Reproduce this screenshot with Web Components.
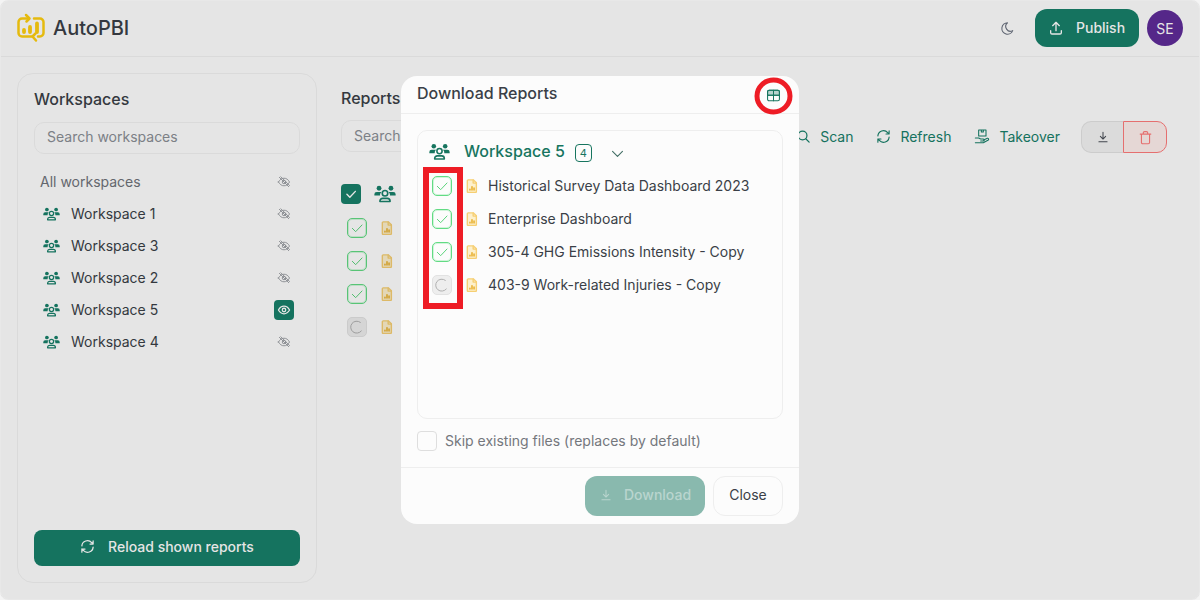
<!DOCTYPE html>
<html lang="en">
<head>
<meta charset="utf-8">
<title>AutoPBI</title>
<style>
    html, body { margin: 0; height: 100%; background: #f4f4f4; overflow: hidden; }
    body { font-family: Inter, "Liberation Sans", sans-serif; color: #3a3f47; }
</style>
</head>
<body>
<app-shell>
    <app-header slot="header"></app-header>
    <side-panel slot="side">
        <workspace-item label="All workspaces" plain></workspace-item>
        <workspace-item label="Workspace 1"></workspace-item>
        <workspace-item label="Workspace 3"></workspace-item>
        <workspace-item label="Workspace 2"></workspace-item>
        <workspace-item label="Workspace 5" active></workspace-item>
        <workspace-item label="Workspace 4"></workspace-item>
    </side-panel>
    <reports-panel slot="main"></reports-panel>
    <download-dialog slot="dialog">
        <report-row label="Historical Survey Data Dashboard 2023" state="done"></report-row>
        <report-row label="Enterprise Dashboard" state="done"></report-row>
        <report-row label="305-4 GHG Emissions Intensity - Copy" state="done"></report-row>
        <report-row label="403-9 Work-related Injuries - Copy" state="busy"></report-row>
    </download-dialog>
</app-shell>

<script>
const ICONS = {
    users: '<circle cx="12" cy="9" r="3"/><path d="M6.500 18v-.5a3 3 0 0 1 3-3h5a3 3 0 0 1 3 3v.5z"/><circle cx="18.500" cy="3.500" r="2.600" fill="currentColor" stroke="none"/><circle cx="5.500" cy="3.500" r="2.600" fill="currentColor" stroke="none"/><path d="M16 7.500h5a2.600 2.600 0 0 1 2.600 2.600v1.400h-6.100a5 5 0 0 0-1.500-4z M8 7.500H3a2.600 2.600 0 0 0-2.600 2.600v1.400h6.100a5 5 0 0 1 1.500-4z" fill="currentColor" stroke="none"/>',
    eyeOff: '<path d="M2.500 12c2.400-4.300 5.600-6.500 9.500-6.500s7.100 2.200 9.500 6.500c-2.400 4.300-5.600 6.500-9.500 6.500s-7.100-2.200-9.500-6.500z"/><circle cx="12" cy="12" r="3"/><path d="M4 4l16 16M6.500 3l15 15"/>',
    eye: '<path d="M2.500 12c2.400-4.300 5.600-6.500 9.500-6.500s7.100 2.200 9.500 6.500c-2.400 4.300-5.600 6.500-9.500 6.500s-7.100-2.200-9.500-6.500z"/><circle cx="12" cy="12" r="3"/>',
    refresh: '<path d="M3 11a9 9 0 0 1 15.700-5.300L21 8M21 3v5h-5M21 13a9 9 0 0 1-15.700 5.300L3 16M8 16H3v5"/>',
    upload: '<path d="M4 16v3a2 2 0 0 0 2 2h12a2 2 0 0 0 2-2v-3M7 8.500L12 3.500l5 5M12 3.500V16"/>',
    download: '<path d="M12 4v11M7.500 11l4.500 4.500 4.500-4.500M5 20h14"/>',
    moon: '<path d="M12 3a7.500 7.500 0 0 0 8.300 12.400A9 9 0 1 1 12 3z"/>',
    table: '<path d="M2.500 11.500V6a2.500 2.500 0 0 1 2.500-2.500h14a2.500 2.500 0 0 1 2.500 2.500v5.500z" fill="currentColor" fill-opacity=".3"/><rect x="2.500" y="3.500" width="19" height="17" rx="2.500"/><path d="M2.500 11.500h19M12 3.500v17"/>',
    chevron: '<path d="M5 9l7 7 7-7"/>',
    search: '<circle cx="10.500" cy="10.500" r="7"/><path d="M16 16l5 5"/>',
    trash: '<path d="M3.500 6.500h17M8.500 6.500V4.500a2 2 0 0 1 2-2h3a2 2 0 0 1 2 2v2M18.500 6.500V20a2 2 0 0 1-2 2h-9a2 2 0 0 1-2-2V6.500"/>',
    takeover: '<path d="M7 3h11v9H7zM11 3v3h3V3M2 15h5l3 1.500h4a1.500 1.500 0 0 1 0 3h-4M14.500 18l5.500-2.500a1.500 1.500 0 0 1 1.500 2.500L14 22H2"/>',
    check: '<path d="M5 12.500l5 5 9.500-10"/>',
    spinner: '<path d="M17 5A9 9 0 1 0 18.500 18"/>',
    report: '<path d="M5.500 1.500h9l5 5v15a1.500 1.500 0 0 1-1.500 1.500H5.500A1.500 1.500 0 0 1 4 21.500V3a1.500 1.500 0 0 1 1.500-1.500z" fill="#fdf0cc"/><path d="M14 1.500V7h5.500"/><path d="M8.500 19v-1.500M12 19v-6M15.500 19v-3.500" stroke="#e6a91f"/>'
};
const VIEWS = { users: '0 0 24 19' };

class ApIcon extends HTMLElement {
    connectedCallback() {
        const name = this.getAttribute('name');
        const size = this.getAttribute('size') || 16;
        const high = this.getAttribute('high') || size;
        const width = this.getAttribute('stroke') || 2;
        this.attachShadow({ mode: 'open' });
        this.shadowRoot.innerHTML = `
            <style>
                :host { display: inline-flex; flex: none; width: ${size}px; height: ${high}px; }
                svg { width: 100%; height: 100%; display: block; }
            </style>
            <svg viewBox="${VIEWS[name] || '0 0 24 24'}" fill="none" stroke="currentColor" stroke-width="${width}"
                stroke-linecap="round" stroke-linejoin="round">${ICONS[name]}</svg>
        `;
    }
}

class AppShell extends HTMLElement {
    constructor() {
        super();
        this.attachShadow({ mode: 'open' });
        this.shadowRoot.innerHTML = `
            <style>
                :host {
                    display: flex;
                    flex-direction: column;
                    position: relative;
                    box-sizing: border-box;
                    height: 600px;
                    background: #ffffff;
                    border: 1px solid #e8e8e8;
                    border-radius: 8px;
                    overflow: hidden;
                    --teal: #18806a;
                    --text: #3a3f47;
                    --line: #f3f3f3;
                }
                .body { flex: 1; display: flex; min-height: 0; padding: 16px; }
                .overlay {
                    position: absolute;
                    inset: 0;
                    display: flex;
                    align-items: center;
                    justify-content: center;
                    background: rgba(0, 0, 0, 0.1);
                }
            </style>
            <slot name="header"></slot>
            <div class="body">
                <slot name="side"></slot>
                <slot name="main"></slot>
            </div>
            <div class="overlay"><slot name="dialog"></slot></div>
        `;
    }
}

class AppHeader extends HTMLElement {
    constructor() {
        super();
        this.attachShadow({ mode: 'open' });
        this.shadowRoot.innerHTML = `
            <style>
                :host {
                    display: flex;
                    align-items: center;
                    flex: none;
                    box-sizing: border-box;
                    height: 56px;
                    padding: 0 16px 1px 15px;
                    border-bottom: 1px solid var(--line);
                }
                .logo { width: 30px; height: 30px; margin-right: 7px; display: block; }
                .name { font-size: 20px; font-weight: 500; color: var(--text); flex: 1; }
                .moon { color: #6b7280; margin-right: 20px; }
                .publish {
                    display: flex;
                    align-items: center;
                    gap: 12px;
                    box-sizing: border-box;
                    width: 104px;
                    height: 38px;
                    padding: 0 0 1px 13px;
                    margin-right: 8px;
                    border-radius: 12px;
                    background: var(--teal);
                    color: #fff;
                    font-size: 14px;
                    font-weight: 500;
                }
                .avatar {
                    display: flex;
                    align-items: center;
                    justify-content: center;
                    width: 36px;
                    height: 36px;
                    border-radius: 50%;
                    background: #5f2c99;
                    color: #fff;
                    font-size: 14px;
                }
            </style>
            <svg class="logo" viewBox="0 0 30 30" fill="none" stroke="#ffd010" stroke-width="2.500" stroke-linecap="round" stroke-linejoin="round">
                <path d="M12.500 5.500H6a3.500 3.500 0 0 0-3.500 3.500v11A3.500 3.500 0 0 0 6 23.500h10.500M18 5.500h6A3.500 3.500 0 0 1 27.500 9v11a3.500 3.500 0 0 1-3.500 3.500h-2"/>
                <path d="M10 2l3.500 3.500-3 3M20 27.500l-3.500-4 3-3"/>
                <path d="M8 17v2M14 14v5M21 10.500V19" stroke-width="3.800"/>
            </svg>
            <span class="name">AutoPBI</span>
            <ap-icon class="moon" name="moon" size="15" stroke="1.800"></ap-icon>
            <div class="publish"><ap-icon name="upload" size="16"></ap-icon>Publish</div>
            <div class="avatar">SE</div>
        `;
    }
}

class SidePanel extends HTMLElement {
    constructor() {
        super();
        this.attachShadow({ mode: 'open' });
        this.shadowRoot.innerHTML = `
            <style>
                :host {
                    display: flex;
                    flex-direction: column;
                    flex: none;
                    box-sizing: border-box;
                    width: 300px;
                    padding: 15px 16px 16px;
                    border: 1px solid var(--line);
                    border-radius: 16px;
                }
                h2 { margin: 0 0 13px; font-size: 16px; line-height: 20px; font-weight: 500; color: var(--text); }
                .search {
                    box-sizing: border-box;
                    height: 32px;
                    padding: 0 12px;
                    border: 1px solid var(--line);
                    border-radius: 10px;
                    font-size: 14px;
                    line-height: 28px;
                    color: #8b8f96;
                }
                .list { flex: 1; display: flex; flex-direction: column; margin-top: 12px; }
                .reload {
                    display: flex;
                    align-items: center;
                    justify-content: center;
                    gap: 13px;
                    box-sizing: border-box;
                    height: 36px;
                    padding-bottom: 3px;
                    border-radius: 8px;
                    background: var(--teal);
                    color: #fff;
                    font-size: 14px;
                    font-weight: 500;
                }
            </style>
            <h2>Workspaces</h2>
            <div class="search">Search workspaces</div>
            <div class="list"><slot></slot></div>
            <div class="reload"><ap-icon name="refresh" size="15"></ap-icon>Reload shown reports</div>
        `;
    }
}

class WorkspaceItem extends HTMLElement {
    constructor() {
        super();
        this.attachShadow({ mode: 'open' });
    }

    connectedCallback() {
        const plain = this.hasAttribute('plain');
        const active = this.hasAttribute('active');
        this.shadowRoot.innerHTML = `
            <style>
                :host {
                    display: flex;
                    align-items: center;
                    box-sizing: border-box;
                    height: 32px;
                    padding: 0 6px 1px;
                    font-size: 14px;
                    color: var(--text);
                }
                :host([plain]) { color: #6f737a; }
                .users { color: var(--teal); margin: 1px 11px 0 3px; }
                .label { flex: 1; }
                .eye {
                    display: flex;
                    align-items: center;
                    justify-content: center;
                    width: 20px;
                    height: 20px;
                    border-radius: 4px;
                    color: #9a9da2;
                }
                .eye.on { background: var(--teal); color: #fff; }
            </style>
            ${plain ? '' : '<ap-icon class="users" name="users" size="17" high="13.500" stroke="1.800"></ap-icon>'}
            <span class="label">${this.getAttribute('label')}</span>
            <span class="eye ${active ? 'on' : ''}"><ap-icon name="${active ? 'eye' : 'eyeOff'}" size="14" stroke="${active ? 2.2 : 1.6}"></ap-icon></span>
        `;
    }
}

class ReportRow extends HTMLElement {
    constructor() {
        super();
        this.attachShadow({ mode: 'open' });
    }

    connectedCallback() {
        const done = this.getAttribute('state') === 'done';
        const label = this.getAttribute('label');
        this.shadowRoot.innerHTML = `
            <style>
                :host {
                    display: flex;
                    align-items: center;
                    height: 33px;
                    font-size: 14px;
                    color: var(--text);
                }
                .box {
                    display: flex;
                    align-items: center;
                    justify-content: center;
                    box-sizing: border-box;
                    width: 20px;
                    height: 20px;
                    border-radius: 5px;
                    border: 1px solid #62db84;
                    box-shadow: inset 0 0 0 1px rgba(110, 225, 140, 0.3);
                    color: #5cd47c;
                }
                .box.busy { border-color: #e2e2e2; box-shadow: none; background: #eeeeee; color: #b0b0b0; }
                .file { color: #f6cf73; margin: 0 9px 0 13px; }
            </style>
            <span class="box ${done ? '' : 'busy'}"><ap-icon name="${done ? 'check' : 'spinner'}" size="16" stroke="1.500"></ap-icon></span>
            <ap-icon class="file" name="report" size="14" stroke="2.400"></ap-icon>
            ${label ? `<span>${label}</span>` : ''}
        `;
    }
}

class ReportsPanel extends HTMLElement {
    constructor() {
        super();
        this.attachShadow({ mode: 'open' });
        this.shadowRoot.innerHTML = `
            <style>
                :host {
                    display: block;
                    flex: 1;
                    min-width: 0;
                    padding: 15px 0 0 24px;
                    margin-right: 16px;
                }
                h2 { margin: 0 0 12px; font-size: 16px; line-height: 20px; font-weight: 500; color: var(--text); }
                .toolbar { display: flex; align-items: center; height: 32px; color: var(--teal); font-size: 14px; }
                .search {
                    box-sizing: border-box;
                    width: 300px;
                    height: 32px;
                    padding: 0 12px;
                    border: 1px solid var(--line);
                    border-radius: 10px;
                    line-height: 30px;
                    color: #8b8f96;
                    margin-right: auto;
                }
                .tool { display: flex; align-items: center; gap: 9px; margin-right: 23px; }
                .tool:nth-of-type(4) { margin-right: 24px; }
                .group { display: flex; height: 32px; margin: 2px 0 0 -3px; }
                .group span {
                    display: flex;
                    align-items: center;
                    justify-content: center;
                    box-sizing: border-box;
                }
                .dl {
                    width: 42px;
                    background: #f4f4f4;
                    border: 1px solid #e4e4e4;
                    border-right: 0;
                    border-radius: 10px 0 0 10px;
                    color: #4a4f57;
                }
                .del {
                    width: 44px;
                    background: #fff0ee;
                    border: 1px solid #ff7c7c;
                    border-radius: 0 10px 10px 0;
                    color: #ff7c7c;
                }
                .all { display: flex; align-items: center; height: 20px; margin-top: 32px; }
                .all-box {
                    display: flex;
                    align-items: center;
                    justify-content: center;
                    width: 20px;
                    height: 20px;
                    border-radius: 4px;
                    background: var(--teal);
                    color: #fff;
                }
                .all ap-icon.users { color: var(--teal); margin-left: 13px; }
                .rows { margin: 7px 0 0 6px; }
            </style>
            <h2>Reports</h2>
            <div class="toolbar">
                <div class="search">Search reports</div>
                <div class="tool"><ap-icon name="search" size="15"></ap-icon>Scan</div>
                <div class="tool"><ap-icon name="refresh" size="15" stroke="1.800"></ap-icon>Refresh</div>
                <div class="tool"><ap-icon name="takeover" size="16" stroke="1.600"></ap-icon>Takeover</div>
                <div class="group">
                    <span class="dl"><ap-icon name="download" size="14" stroke="1.800"></ap-icon></span>
                    <span class="del"><ap-icon name="trash" size="15" stroke="1.800"></ap-icon></span>
                </div>
            </div>
            <div class="all">
                <span class="all-box"><ap-icon name="check" size="14" stroke="2.400"></ap-icon></span>
                <ap-icon class="users" name="users" size="22" high="17.500" stroke="1.800"></ap-icon>
            </div>
            <div class="rows">
                <report-row state="done"></report-row>
                <report-row state="done"></report-row>
                <report-row state="done"></report-row>
                <report-row state="busy"></report-row>
            </div>
        `;
    }
}

class DownloadDialog extends HTMLElement {
    constructor() {
        super();
        this.attachShadow({ mode: 'open' });
        this.shadowRoot.innerHTML = `
            <style>
                :host {
                    display: flex;
                    flex-direction: column;
                    position: relative;
                    box-sizing: border-box;
                    width: 398px;
                    height: 448px;
                    background: #fcfcfc;
                    border-radius: 16px;
                    --teal: #17755f;
                }
                header {
                    display: flex;
                    align-items: center;
                    justify-content: space-between;
                    flex: none;
                    box-sizing: border-box;
                    height: 38px;
                    padding: 0 18px 4px 16px;
                    border-bottom: 1px solid #eeeeee;
                    font-size: 16px;
                    font-weight: 500;
                    color: var(--text);
                }
                header ap-icon { color: var(--teal); margin-top: 5px; }
                .card {
                    flex: 1;
                    margin: 16px 16px 0;
                    padding: 6px 11px 0 14px;
                    border: 1px solid #eeeeee;
                    border-radius: 10px;
                }
                .group { display: flex; align-items: center; height: 28px; margin-bottom: 4px; color: var(--teal); }
                .group .users { margin: 0 14px 0 -3px; }
                .title { font-size: 16px; font-weight: 500; }
                .count {
                    display: flex;
                    align-items: center;
                    justify-content: center;
                    box-sizing: border-box;
                    width: 17px;
                    height: 18px;
                    margin: 3px 17px 0 10px;
                    border: 1px solid var(--teal);
                    border-radius: 4px;
                    font-size: 11px;
                }
                .group .chev { color: #3f6c63; margin-top: 5px; }
                .skip {
                    display: flex;
                    align-items: center;
                    gap: 8px;
                    margin: 12px 16px 16px;
                    font-size: 14px;
                    color: #74777d;
                }
                .skip i { font-style: normal; margin-bottom: 1px; }
                .skip span {
                    box-sizing: border-box;
                    width: 20px;
                    height: 20px;
                    border: 1px solid #dedede;
                    border-radius: 4px;
                }
                footer {
                    display: flex;
                    justify-content: flex-end;
                    gap: 8px;
                    flex: none;
                    padding: 8px 16px;
                    border-top: 1px solid #eeeeee;
                    font-size: 14px;
                    font-weight: 500;
                }
                .btn {
                    display: flex;
                    align-items: center;
                    justify-content: center;
                    box-sizing: border-box;
                    height: 40px;
                    padding-bottom: 3px;
                    border-radius: 12px;
                }
                .download {
                    gap: 11px;
                    width: 120px;
                    background: #89b9ae;
                    color: #b9d5ce;
                }
                .close {
                    width: 70px;
                    border: 1px solid #eeeeee;
                    color: var(--text);
                    font-weight: 400;
                }
                .mark-circle { position: absolute; left: 353px; top: 1px; width: 39px; height: 38px; }
                .mark-rect {
                    position: absolute;
                    left: 22px;
                    top: 91px;
                    width: 40px;
                    height: 142px;
                    box-sizing: border-box;
                    border: 6px solid #ee1c25;
                }
            </style>
            <header>Download Reports<ap-icon name="table" size="15" stroke="1.700"></ap-icon></header>
            <div class="card">
                <div class="group">
                    <ap-icon class="users" name="users" size="21" high="17" stroke="1.800"></ap-icon>
                    <span class="title">Workspace 5</span>
                    <span class="count">4</span>
                    <ap-icon class="chev" name="chevron" size="17" stroke="1.500"></ap-icon>
                </div>
                <slot></slot>
            </div>
            <div class="skip"><span></span><i>Skip existing files (replaces by default)</i></div>
            <footer>
                <div class="btn download"><ap-icon name="download" size="14" stroke="1.800"></ap-icon>Download</div>
                <div class="btn close">Close</div>
            </footer>
            <svg class="mark-circle" viewBox="0 0 39 38" fill="none"><ellipse cx="19.500" cy="19" rx="16.500" ry="16" stroke="#ee1c25" stroke-width="5"/></svg>
            <div class="mark-rect"></div>
        `;
    }
}

customElements.define('ap-icon', ApIcon);
customElements.define('app-shell', AppShell);
customElements.define('app-header', AppHeader);
customElements.define('side-panel', SidePanel);
customElements.define('workspace-item', WorkspaceItem);
customElements.define('report-row', ReportRow);
customElements.define('reports-panel', ReportsPanel);
customElements.define('download-dialog', DownloadDialog);
</script>
</body>
</html>
